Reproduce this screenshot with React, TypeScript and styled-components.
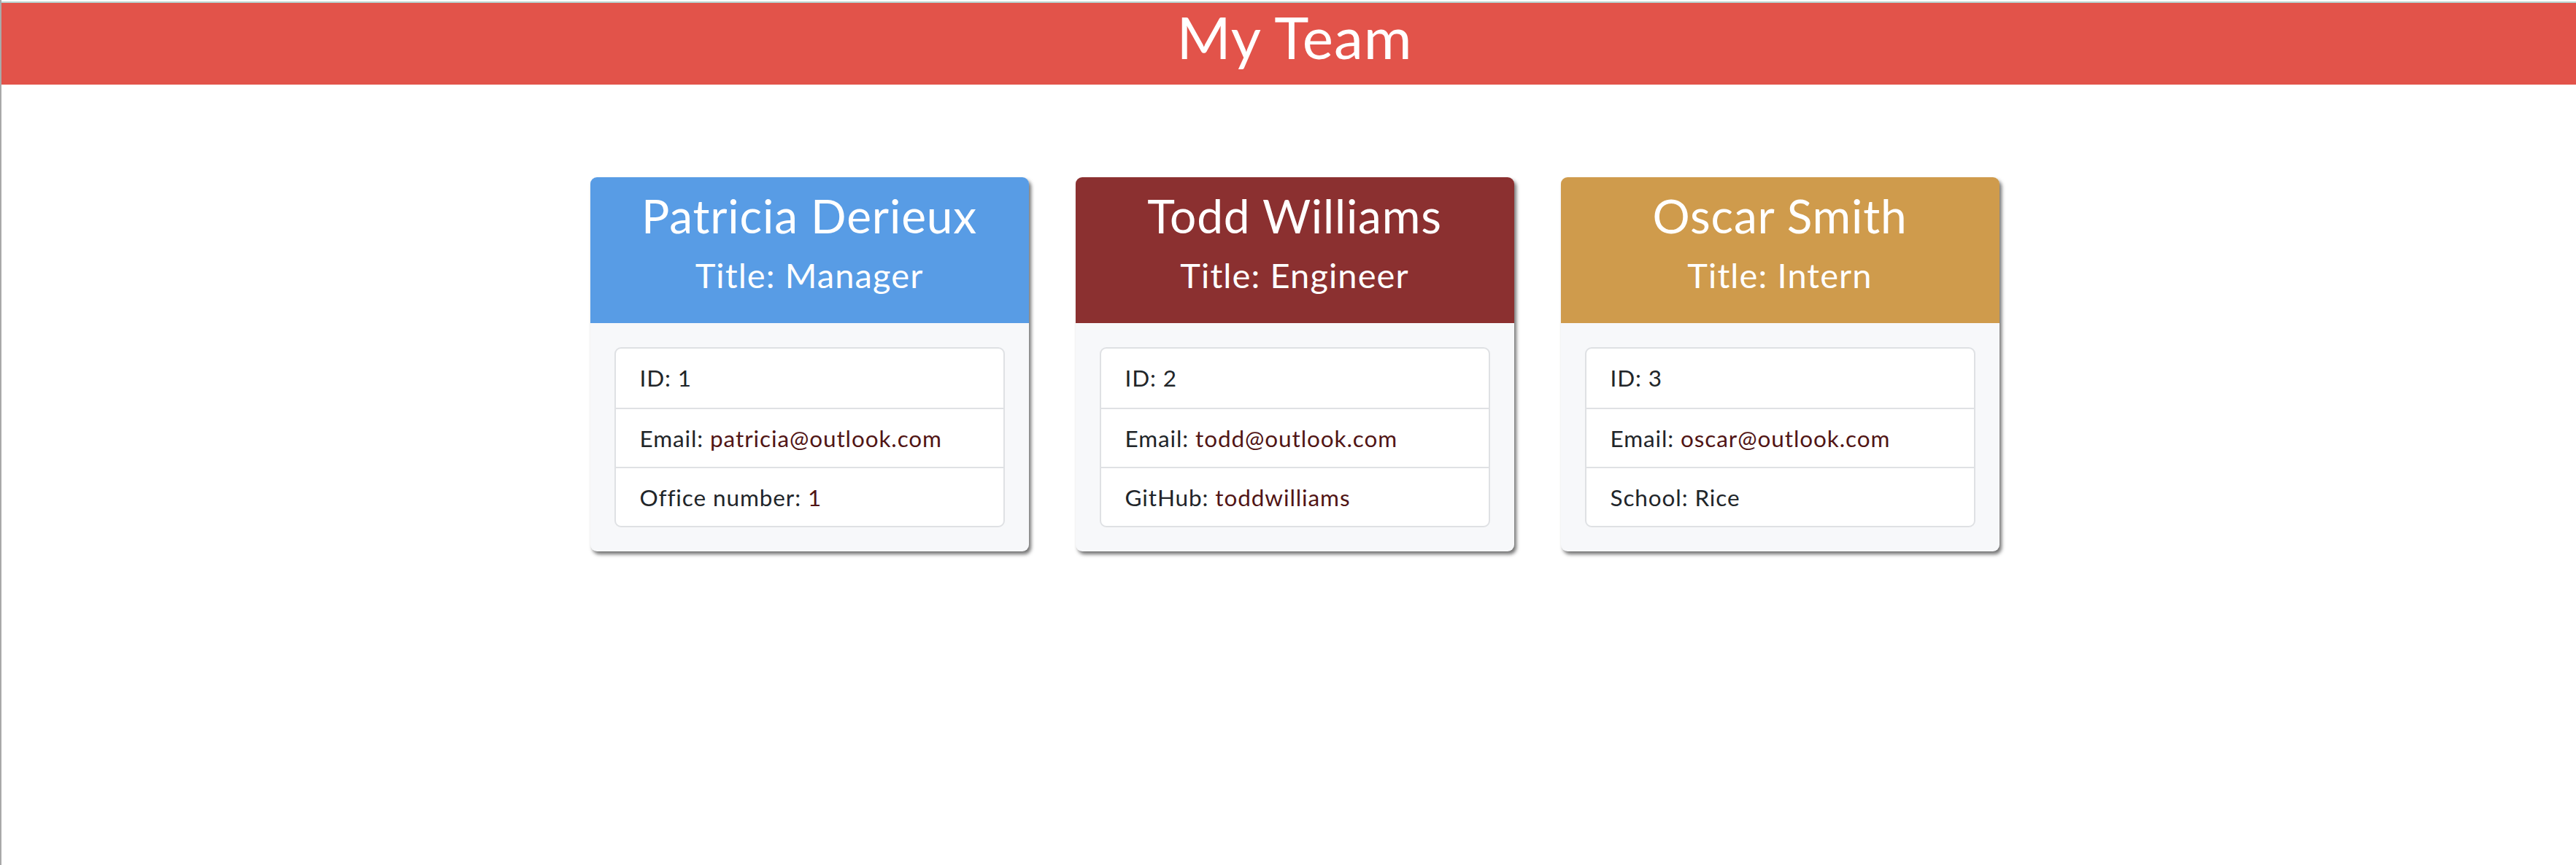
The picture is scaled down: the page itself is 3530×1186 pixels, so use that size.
import React from "react";
import styled, { createGlobalStyle } from "styled-components";

const GlobalStyle = createGlobalStyle`
  html, body {
    margin: 0;
    padding: 0;
    background: #ffffff;
  }
  body {
    font-family: Lato, "Open Sans", "Noto Sans", sans-serif;
    color: #212529;
  }
  * { box-sizing: border-box; }
`;

const Page = styled.div`
  min-height: 1186px;
  border-left: 2px solid #a9a9a9;
  padding-top: 2px;
`;

const TopBar = styled.header`
  background: #e2534a;
  border-top: 2px solid #b9d3d0;
  height: 114px;
  padding: 0 0 20px 16px;
  display: flex;
  justify-content: center;
`;

const Heading = styled.h1`
  margin: 0;
  font-size: 80px;
  line-height: 92px;
  font-weight: 400;
  letter-spacing: 1px;
  color: #ffffff;
`;

const Main = styled.main`
  padding: 127px 0 0 16px;
  display: flex;
  justify-content: center;
  gap: 64px;
`;

const Card = styled.section`
  width: 601px;
  border-radius: 9px;
  background: #f7f8fa;
  box-shadow: 3px 4px 5px rgba(0, 0, 0, 0.55);
  display: flex;
  flex-direction: column;
`;

const CardHead = styled.div<{ $bg: string }>`
  background: ${(p) => p.$bg};
  border-radius: 9px 9px 0 0;
  height: 200px;
  padding: 15px 10px 0;
  display: flex;
  flex-direction: column;
  align-items: center;
  color: #ffffff;
`;

const Name = styled.h2`
  margin: 0 0 14px;
  font-size: 64px;
  line-height: 76.8px;
  font-weight: 400;
  letter-spacing: 0.85px;
`;

const Role = styled.h3`
  margin: 0;
  font-size: 47px;
  line-height: 56.4px;
  font-weight: 400;
  letter-spacing: 1.1px;
`;

const CardBody = styled.div`
  padding: 33px;
`;

const InfoList = styled.ul`
  list-style: none;
  margin: 0;
  padding: 0;
  background: #ffffff;
  border: 2px solid #dfe1e4;
  border-radius: 9px;
  overflow: hidden;
`;

const InfoRow = styled.li`
  padding: 16px 33px;
  font-size: 31.5px;
  line-height: 48px;
  letter-spacing: 0.9px;
  height: 81px;
  & + & {
    border-top: 2px solid #dfe1e4;
  }
`;

const Link = styled.span`
  color: #511515;
`;

type Member = {
  name: string;
  title: string;
  color: string;
  id: number;
  email: string;
  extraLabel: string;
  extraValue: string;
  extraLink: boolean;
};

const team: Member[] = [
  {
    name: "Patricia Derieux",
    title: "Manager",
    color: "#589ce5",
    id: 1,
    email: "patricia@outlook.com",
    extraLabel: "Office number",
    extraValue: "1",
    extraLink: true,
  },
  {
    name: "Todd Williams",
    title: "Engineer",
    color: "#8b3030",
    id: 2,
    email: "todd@outlook.com",
    extraLabel: "GitHub",
    extraValue: "toddwilliams",
    extraLink: true,
  },
  {
    name: "Oscar Smith",
    title: "Intern",
    color: "#cf9b4c",
    id: 3,
    email: "oscar@outlook.com",
    extraLabel: "School",
    extraValue: "Rice",
    extraLink: false,
  },
];

export default function App() {
  return (
    <>
      <GlobalStyle />
      <Page>
        <TopBar>
          <Heading>My Team</Heading>
        </TopBar>
        <Main>
          {team.map((m) => (
            <Card key={m.id}>
              <CardHead $bg={m.color}>
                <Name>{m.name}</Name>
                <Role>Title: {m.title}</Role>
              </CardHead>
              <CardBody>
                <InfoList>
                  <InfoRow>ID: {m.id}</InfoRow>
                  <InfoRow>
                    Email: <Link>{m.email}</Link>
                  </InfoRow>
                  <InfoRow>
                    {m.extraLabel}:{" "}
                    {m.extraLink ? <Link>{m.extraValue}</Link> : m.extraValue}
                  </InfoRow>
                </InfoList>
              </CardBody>
            </Card>
          ))}
        </Main>
      </Page>
    </>
  );
}
